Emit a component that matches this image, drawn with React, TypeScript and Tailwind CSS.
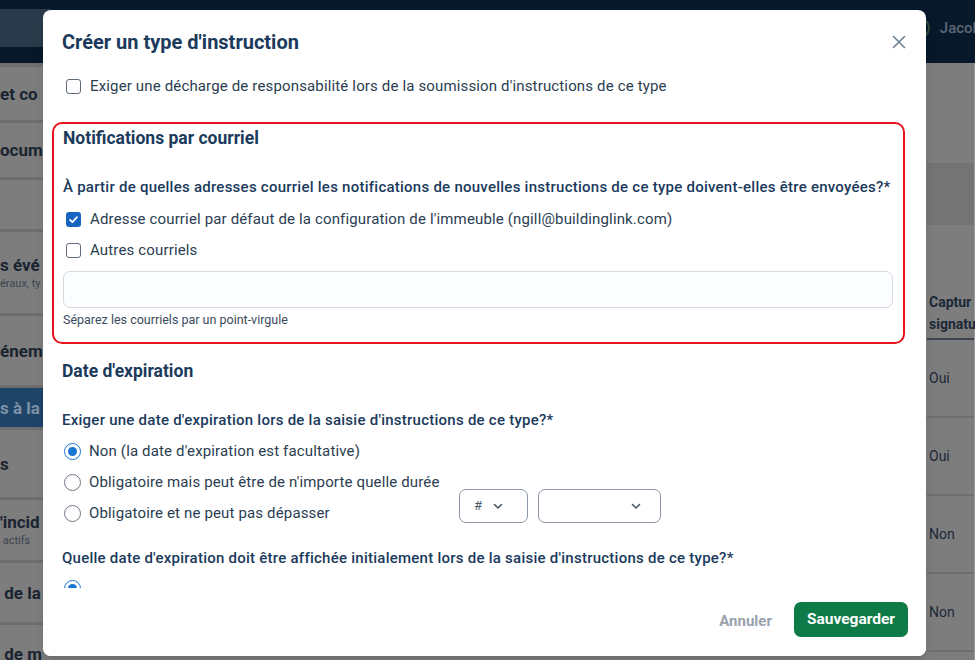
import React from "react";

const navy = "text-[#1b3a5c]";

function Checkbox({ checked }: { checked?: boolean }) {
  if (checked) {
    return (
      <span className="flex h-[15px] w-[15px] shrink-0 items-center justify-center rounded-[3px] bg-[#1565c0]">
        <svg width="11" height="11" viewBox="0 0 12 12" fill="none">
          <path d="M2.2 6.3 L4.8 8.8 L9.8 3.4" stroke="white" strokeWidth="1.9" strokeLinecap="round" strokeLinejoin="round" />
        </svg>
      </span>
    );
  }
  return <span className="h-[15px] w-[15px] shrink-0 rounded-[3px] border-[1.5px] border-[#5f6b78] bg-white" />;
}

function Radio({ checked }: { checked?: boolean }) {
  if (checked) {
    return (
      <span className="flex h-[17px] w-[17px] shrink-0 items-center justify-center rounded-full border-[1.5px] border-[#1976d2] bg-white">
        <span className="h-[9px] w-[9px] rounded-full bg-[#1976d2]" />
      </span>
    );
  }
  return <span className="h-[17px] w-[17px] shrink-0 rounded-full border-[1.5px] border-[#6b7784] bg-white" />;
}

function Chevron() {
  return (
    <svg width="12" height="12" viewBox="0 0 12 12" fill="none">
      <path d="M2.5 4.5 L6 8 L9.5 4.5" stroke="#4a5a6b" strokeWidth="1.6" strokeLinecap="round" strokeLinejoin="round" />
    </svg>
  );
}

export default function App() {
  const leftRows: { h: number; text?: string; sub?: string; active?: boolean }[] = [
    { h: 56, text: "et co" },
    { h: 57, text: "ocum" },
    { h: 52 },
    { h: 84, text: "s évé", sub: "éraux, ty" },
    { h: 72, text: "énem" },
    { h: 42, text: "s à la", active: true },
    { h: 70, text: "s" },
    { h: 63, text: "'incid", sub: " actifs" },
    { h: 62, text: " de la" },
    { h: 60, text: " de m" },
  ];
  const body = "text-[15px] leading-[20px] tracking-[0.15px] text-[#2b3d50]";
  const question = `text-[15px] font-medium leading-[20px] tracking-[0.25px] ${navy}`;
  const heading = `text-[17.5px] font-bold leading-[22px] ${navy}`;
  return (
    <div
      className="relative h-[660px] w-[975px] overflow-hidden bg-[#7d7d7d]"
      style={{ fontFamily: "Roboto, 'Noto Sans', sans-serif" }}
    >
      {/* background page */}
      <div className="flex h-[63px] flex-col bg-[#07182b]">
        <div className="h-[9px]" />
        <div className="flex h-[38px] items-center">
          <div className="h-full w-[50px] bg-[#2b3a4a]" />
          <div className="flex-1" />
          <div className="mr-[10px] h-[22px] w-[22px] rounded-full border-2 border-[#2e4a3c]" />
          <span className="mr-[-6px] text-[15px] font-medium text-[#5d6876]">Jacob</span>
        </div>
      </div>
      <div className="flex h-[597px]">
        <div className="flex w-[60px] flex-col border-t-[4px] border-[#6f6f6f]">
          {leftRows.map((r, i) => (
            <div
              key={i}
              style={{ height: r.h }}
              className={`flex shrink-0 flex-col justify-center border-b-[3px] border-[#6e6e6e] ${r.active ? "bg-[#1e4468]" : ""}`}
            >
              {r.text && (
                <span className={`whitespace-pre text-[17px] font-bold leading-[20px] ${r.active ? "text-[#7f93a8]" : "text-[#1a2430]"}`}>
                  {r.text}
                </span>
              )}
              {r.sub && <span className="mt-[2px] whitespace-pre text-[11px] leading-[14px] text-[#3a434e]">{r.sub}</span>}
            </div>
          ))}
        </div>
        <div className="flex-1" />
        <div className="flex w-[48px] flex-col border-r border-[#9a9a9a]">
          <div className="h-[100px]" />
          <div className="h-[62px] bg-[#747474]" />
          <div className="flex h-[115px] flex-col justify-end border-b-2 border-[#3c4550] pb-[3px] pl-[2px] text-[14px] font-bold leading-[22px] text-[#1a2838]">
            <span>Captur</span>
            <span>signatu</span>
          </div>
          {["Oui", "Oui", "Non", "Non"].map((t, i) => (
            <div key={i} className="flex h-[78px] shrink-0 items-center border-b-2 border-[#6e6e6e] pl-[2px] text-[14px] text-[#1a2838]">
              {t}
            </div>
          ))}
        </div>
      </div>

      {/* modal */}
      <div className="absolute left-[43px] top-[10px] flex h-[646px] w-[883px] flex-col overflow-hidden rounded-[8px] bg-white shadow-lg">
        <div className="flex h-[63px] shrink-0 items-center justify-between pl-[19px] pr-[20px]">
          <h1 className={`text-[20px] font-bold ${navy}`}>Créer un type d'instruction</h1>
          <svg width="14" height="14" viewBox="0 0 14 14" fill="none">
            <path d="M1.5 1.5 L12.5 12.5 M12.5 1.5 L1.5 12.5" stroke="#6f8091" strokeWidth="1.6" strokeLinecap="round" />
          </svg>
        </div>
        <div className="flex-1 overflow-hidden pl-[19px] pr-[33px]">
          <label className={`mt-[3px] flex items-center gap-[9px] pl-[4px] ${body}`}>
            <Checkbox />
            <span>Exiger une décharge de responsabilité lors de la soumission d'instructions de ce type</span>
          </label>

          <div className="ml-[-10px] mr-[-12px] mt-[26px] rounded-[10px] border-2 border-[#e8141d] pb-[14px] pl-[9px] pr-[10px] pt-[3px]">
            <h2 className={heading}>Notifications par courriel</h2>
            <p className={`mt-[28px] ${question}`}>
              À partir de quelles adresses courriel les notifications de nouvelles instructions de ce type doivent-elles être envoyées?*
            </p>
            <label className={`mt-[12px] flex items-center gap-[9px] pl-[3px] ${body}`}>
              <Checkbox checked />
              <span>Adresse courriel par défaut de la configuration de l'immeuble (ngill@buildinglink.com)</span>
            </label>
            <label className={`mt-[11px] flex items-center gap-[9px] pl-[3px] ${body}`}>
              <Checkbox />
              <span>Autres courriels</span>
            </label>
            <div className="mt-[11px] h-[37px] rounded-[7px] border border-[#d3dae2] bg-[#fcfdfe]" />
            <p className="mt-[4px] text-[12.5px] leading-[16px] text-[#3a4a5c]">Séparez les courriels par un point-virgule</p>
          </div>

          <h2 className={`mt-[16px] ${heading}`}>Date d'expiration</h2>
          <p className={`mt-[28px] ${question}`}>
            Exiger une date d'expiration lors de la saisie d'instructions de ce type?*
          </p>
          <div className={`mt-[11px] flex flex-col gap-[11px] ${body}`}>
            <label className="flex items-center gap-[8px] pl-[2px]">
              <Radio checked />
              <span>Non (la date d'expiration est facultative)</span>
            </label>
            <label className="flex items-center gap-[8px] pl-[2px]">
              <Radio />
              <span>Obligatoire mais peut être de n'importe quelle durée</span>
            </label>
            <div className="flex items-center">
              <label className="flex w-[397px] items-center gap-[8px] pl-[2px]">
                <Radio />
                <span>Obligatoire et ne peut pas dépasser</span>
              </label>
              <div className="mt-[-15px] flex gap-[10px]">
                <div className="flex h-[34px] w-[69px] items-center gap-[10px] rounded-[7px] border-[1.5px] border-[#8a96a3] pl-[14px] text-[13px] text-[#4a5a6b]">
                  <span>#</span>
                  <Chevron />
                </div>
                <div className="flex h-[34px] w-[123px] items-center justify-end rounded-[7px] border-[1.5px] border-[#8a96a3] pr-[18px]">
                  <Chevron />
                </div>
              </div>
            </div>
          </div>
          <p className={`mt-[25px] ${question}`}>
            Quelle date d'expiration doit être affichée initialement lors de la saisie d'instructions de ce type?*
          </p>
          <div className="mt-[12px] flex items-center gap-[8px] pl-[2px]">
            <Radio checked />
          </div>
        </div>
        <div className="flex h-[68px] shrink-0 items-start justify-end gap-[22px] bg-white pr-[18px] pt-[14px]">
          <button className="mt-[8px] text-[15px] font-bold text-[#98a2ad]">Annuler</button>
          <button className="h-[35px] rounded-[7px] bg-[#0d7a47] px-[13px] text-[15.5px] font-bold text-white">Sauvegarder</button>
        </div>
      </div>
    </div>
  );
}
